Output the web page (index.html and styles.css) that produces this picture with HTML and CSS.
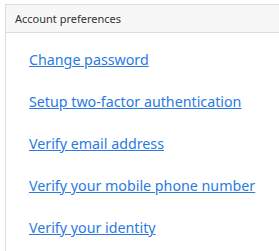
FILE: index.html
```html
<!DOCTYPE html>
<html>
<head>
<meta charset="utf-8">
<link rel="stylesheet" href="styles.css">
</head>
<body>
<div class="panel">
  <div class="panel-heading">Account preferences</div>
  <ul class="links">
    <li><a href="#">Change password</a></li>
    <li><a href="#">Setup two-factor authentication</a></li>
    <li><a href="#">Verify email address</a></li>
    <li><a href="#">Verify your mobile phone number</a></li>
    <li><a href="#">Verify your identity</a></li>
  </ul>
</div>
</body>
</html>
```
FILE: styles.css
```css
html, body { margin: 0; padding: 0; background: #fff; }
body { font-family: "Noto Sans", "Open Sans", sans-serif; padding: 4px 0 0 5px; overflow: hidden; height: 251px; box-sizing: border-box; }
.panel { width: 274px; border: 1px solid #ddd; border-right: none; border-bottom: none; height: 247px; box-sizing: border-box; }
.panel-heading { background: #f7f7f7; border-bottom: 1px solid #ddd; font-size: 11px; color: #333; padding: 0 9px; height: 27px; line-height: 27px; }
.links { list-style: none; margin: 0; padding: 17px 0 0 23px; }
.links li { height: 42px; font-size: 14.25px; line-height: 20px; white-space: nowrap; }
.links a { color: #2a7ae2; text-decoration: underline; }
```
